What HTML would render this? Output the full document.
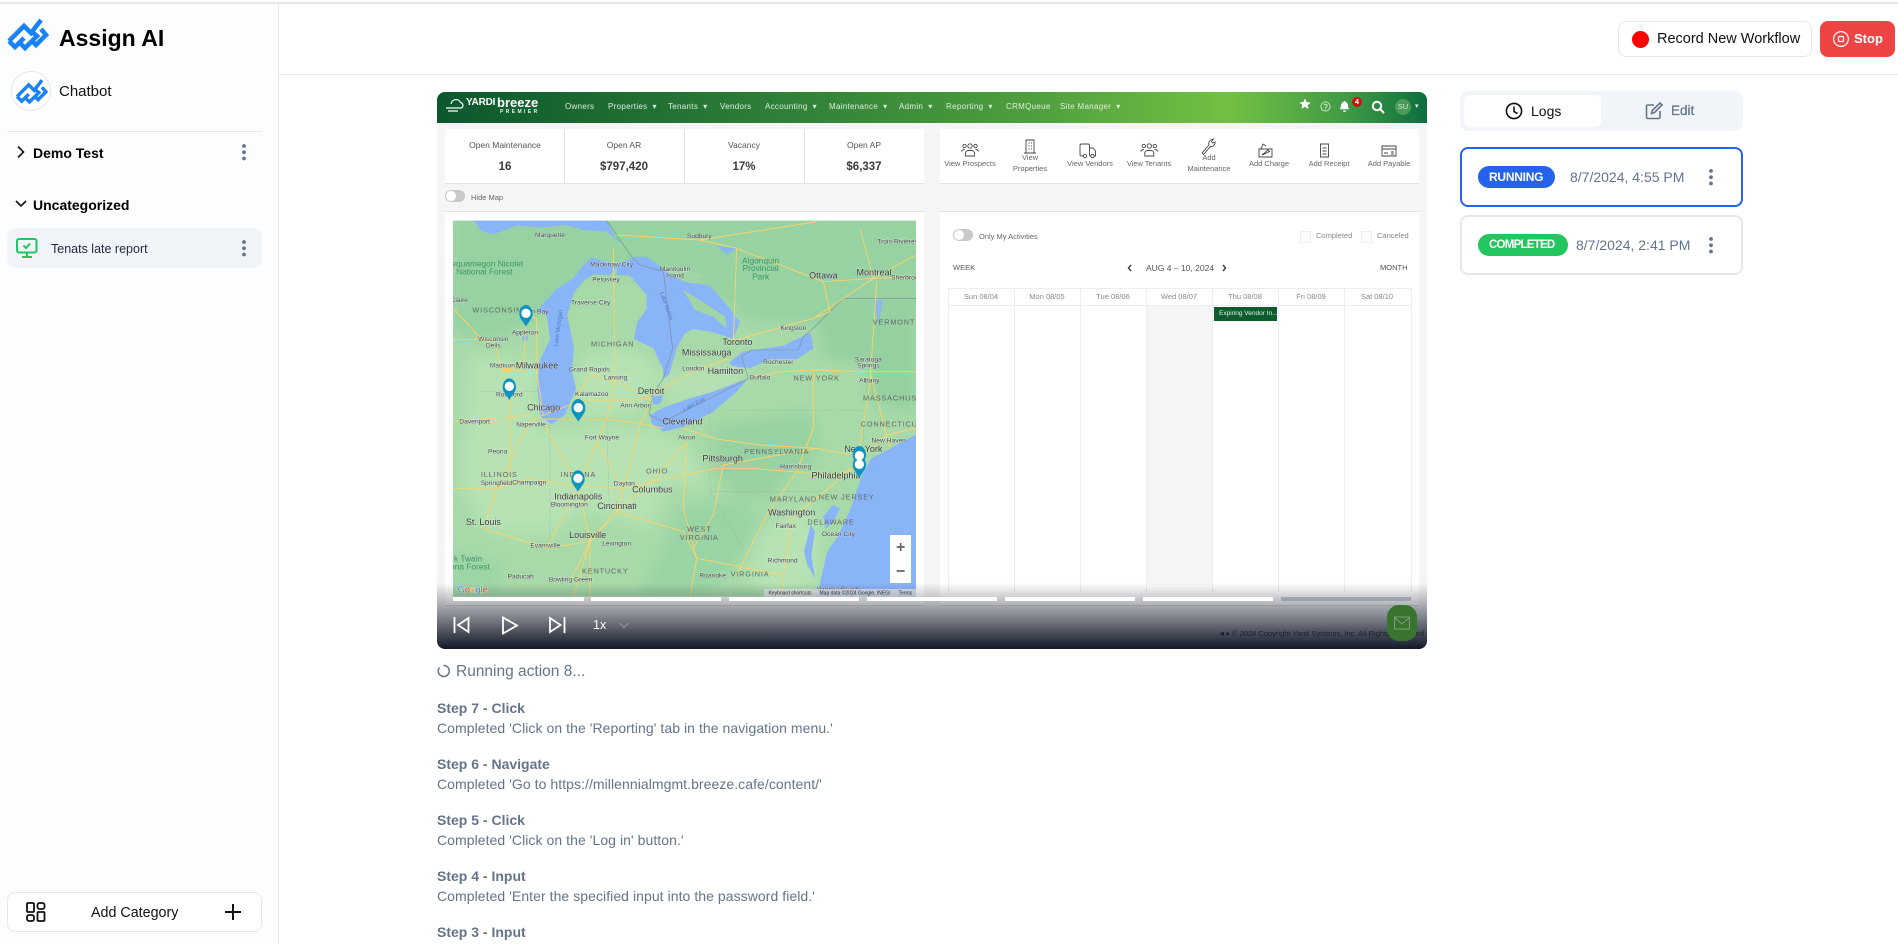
<!DOCTYPE html>
<html lang="en"><head><meta charset="utf-8"><title>Assign AI</title>
<style>
*{box-sizing:border-box}
html,body{margin:0;padding:0;width:1898px;height:944px;overflow:hidden;background:#fff;font-family:"Liberation Sans",sans-serif;color:#000}
.t{position:absolute;line-height:20px;margin-top:-10px;white-space:nowrap}
.c{transform:translateX(-50%)}
.b{position:absolute}
svg{position:absolute;overflow:visible}
.nv{font-size:8px;color:#dcefdc;letter-spacing:.3px}
.sl{font-size:8.5px;color:#555}
.sv{font-size:11.5px;color:#3a3a3a;font-weight:bold}
.al{font-size:7.5px;color:#666;line-height:11px;text-align:center;transform:translateX(-50%);position:absolute;white-space:nowrap}
.ch{font-size:7.5px;color:#888}
.ttl{font-size:14px;font-weight:bold;color:#64748b}
.dsc{font-size:14px;color:#64748b;letter-spacing:.06px}
#map text{font-family:"Liberation Sans",sans-serif;text-anchor:middle;fill:#3c4043;font-size:20px;paint-order:stroke;stroke:#ffffff99;stroke-width:2px}
#map .m{font-size:27px;fill:#333}
#map .s{font-size:22px;letter-spacing:2.5px;fill:#666;stroke:none}
#map .g{font-size:25px;fill:#3f9467;stroke:none}
#map .l{font-size:17px;fill:#4a78c0;stroke:none}
</style></head><body>

<!-- top line -->
<div class="b" style="left:0;top:2px;width:1898px;height:2px;background:#e5e7eb"></div>

<!-- sidebar -->
<div class="b" style="left:0;top:4px;width:279px;height:940px;background:#fcfdff;border-right:1px solid #e5e7eb"></div>
<svg style="left:0;top:-2px" width="60" height="60" fill="none" stroke="#1a82f7" stroke-width="4.6"><path d="M9 43L24 28L31 35L41 22M9 43L15 49L24 40M19 44L25 50L37 38L31 33M41 31L46 37L36 47L32 43"/></svg>
<div class="t" style="left:59px;top:38px;font-size:23px;font-weight:bold">Assign AI</div>
<div class="b" style="left:11px;top:71px;width:40px;height:40px;border-radius:50%;border:1px solid #e5e7eb;background:#fff"></div>
<svg style="left:0;top:0" width="60" height="120" fill="none" stroke="#1a82f7" stroke-width="4.4"><g transform="translate(10 63) scale(.78)"><path d="M9 43L24 28L31 35L41 22M9 43L15 49L24 40M19 44L25 50L37 38L31 33M41 31L46 37L36 47L32 43"/></g></svg>
<div class="t" style="left:59px;top:92px;font-size:15px;color:#111">Chatbot</div>
<div class="b" style="left:7px;top:131px;width:255px;height:1px;background:#e5e7eb"></div>
<svg style="left:15px;top:145px" width="12" height="14" fill="none" stroke="#111" stroke-width="1.6"><path d="M3 1.5L8.5 7L3 12.5"/></svg>
<div class="t" style="left:33px;top:153px;font-size:14px;font-weight:bold">Demo Test</div>
<svg style="left:242px;top:144px" width="5" height="16" fill="#64748b"><circle cx="2" cy="2" r="1.9"/><circle cx="2" cy="8.3" r="1.9"/><circle cx="2" cy="14.5" r="1.9"/></svg>
<svg style="left:14px;top:199px" width="14" height="10" fill="none" stroke="#111" stroke-width="1.6"><path d="M2 2L7 7L12 2"/></svg>
<div class="t" style="left:33px;top:205px;font-size:14px;font-weight:bold">Uncategorized</div>
<div class="b" style="left:7px;top:228px;width:255px;height:40px;background:#f1f5f9;border-radius:8px"></div>
<svg style="left:15px;top:237px" width="24" height="22" fill="none" stroke="#22c55e" stroke-width="2"><rect x="2" y="2" width="19.5" height="13.5" rx="2"/><path d="M7 20h10M12 16v4M8.5 8.5l2.5 2.5l4-4.5"/></svg>
<div class="t" style="left:51px;top:249px;font-size:12.5px;color:#1e293b">Tenats late report</div>
<svg style="left:242px;top:240px" width="5" height="16" fill="#64748b"><circle cx="2" cy="2" r="1.9"/><circle cx="2" cy="8.3" r="1.9"/><circle cx="2" cy="14.5" r="1.9"/></svg>
<div class="b" style="left:7px;top:892px;width:255px;height:40px;background:#fff;border:1px solid #e5e7eb;border-radius:8px"></div>
<svg style="left:25px;top:901px" width="22" height="22" fill="none" stroke="#111" stroke-width="1.8"><rect x="2" y="2" width="7" height="9" rx="1"/><rect x="12.500" y="2" width="7" height="6" rx="2"/><rect x="2" y="14" width="7" height="6" rx="2"/><rect x="12.500" y="11" width="7" height="9" rx="1"/></svg>
<div class="t" style="left:91px;top:913px;font-size:14.3px;color:#111">Add Category</div>
<svg style="left:224px;top:903px" width="18" height="18" stroke="#111" stroke-width="2"><path d="M9 1v16M1 9h16"/></svg>

<!-- header -->
<div class="b" style="left:279px;top:74px;width:1619px;height:1px;background:#e5e7eb"></div>
<div class="b" style="left:1618px;top:21px;width:194px;height:36px;border:1px solid #e5e7eb;border-radius:8px;background:#fff"></div>
<div class="b" style="left:1632px;top:31px;width:17px;height:17px;border-radius:50%;background:#f00"></div>
<div class="t" style="left:1657px;top:39px;font-size:14.5px;color:#111">Record New Workflow</div>
<div class="b" style="left:1820px;top:21px;width:75px;height:36px;border-radius:8px;background:#ef4444"></div>
<svg style="left:1832px;top:30px" width="18" height="18" fill="none" stroke="#fff" stroke-width="1.2"><circle cx="9" cy="9" r="7.400"/><rect x="6.500" y="6.500" width="5" height="5" rx="1"/></svg>
<div class="t" style="left:1854px;top:39px;font-size:13px;font-weight:bold;color:#fff">Stop</div>

<!-- right tabs -->
<div class="b" style="left:1460px;top:91px;width:283px;height:40px;background:#f1f5f9;border-radius:8px"></div>
<div class="b" style="left:1464px;top:95px;width:137px;height:32px;background:#fff;border-radius:6px"></div>
<svg style="left:1505px;top:102px" width="18" height="18" fill="none" stroke="#111" stroke-width="1.6"><circle cx="9" cy="9" r="7.6"/><path d="M9 4.500V9.500L12.500 11.500"/></svg>
<div class="t" style="left:1531px;top:111px;font-size:14px;color:#111">Logs</div>
<svg style="left:1645px;top:102px" width="18" height="18" fill="none" stroke="#64748b" stroke-width="1.6"><path d="M9 3H3a1.500 1.500 0 0 0-1.500 1.500V15A1.500 1.500 0 0 0 3 16.500h10.500A1.500 1.500 0 0 0 15 15V9M6.500 11.500l.7-3L15 1l2 2L9.500 10.500z"/></svg>
<div class="t" style="left:1671px;top:111px;font-size:13.5px;color:#64748b;-webkit-text-stroke:.25px #64748b">Edit</div>

<div class="b" style="left:1460px;top:147px;width:283px;height:60px;border:2px solid #2563eb;border-radius:8px;background:#fff"></div>
<div class="b" style="left:1478px;top:166px;width:77px;height:22px;border-radius:11px;background:#2563eb"></div>
<div class="t" style="left:1489px;top:177px;font-size:12px;font-weight:bold;color:#fff;letter-spacing:-.25px">RUNNING</div>
<div class="t" style="left:1570px;top:177px;font-size:14px;color:#64748b">8/7/2024, 4:55 PM</div>
<svg style="left:1709px;top:169px" width="5" height="16" fill="#64748b"><circle cx="2" cy="2" r="1.9"/><circle cx="2" cy="8.3" r="1.9"/><circle cx="2" cy="14.5" r="1.9"/></svg>

<div class="b" style="left:1460px;top:215px;width:283px;height:60px;border:2px solid #e5e7eb;border-radius:8px;background:#fff"></div>
<div class="b" style="left:1478px;top:234px;width:90px;height:22px;border-radius:11px;background:#22c55e"></div>
<div class="t" style="left:1489px;top:245px;font-size:11.5px;font-weight:bold;color:#fff;letter-spacing:-.75px">COMPLETED</div>
<div class="t" style="left:1576px;top:245px;font-size:14px;color:#64748b">8/7/2024, 2:41 PM</div>
<svg style="left:1709px;top:237px" width="5" height="16" fill="#64748b"><circle cx="2" cy="2" r="1.9"/><circle cx="2" cy="8.3" r="1.9"/><circle cx="2" cy="14.5" r="1.9"/></svg>

<!-- video -->
<div class="b" style="left:437px;top:92px;width:990px;height:557px;overflow:hidden;border-radius:8px;background:#f5f5f5">
<div class="b" style="left:-437px;top:-92px;width:1898px;height:944px">
  <div class="b" style="left:437px;top:92px;width:990px;height:31px;background:linear-gradient(90deg,#0c572d 0%,#2f8038 35%,#4f9e3e 60%,#74c043 80%,#3f9a45 92%,#0b6f3e 100%)"></div>
  <!-- yardi logo -->
  <svg style="left:445px;top:96px" width="20" height="18" fill="none" stroke="#fff" stroke-width="1.2"><path d="M6 8a5 5 0 0 1 9.500-1.500a3 3 0 0 1 1 5.500H5M1 12h4M3 15h10"/></svg>
  <div class="t" style="left:466px;top:103px;font-size:10px;font-weight:bold;color:#fff;letter-spacing:-.2px">YARDI</div>
  <div class="t" style="left:497px;top:103px;font-size:13px;font-weight:bold;color:#fff">breeze</div>
  <div class="t" style="left:500px;top:112px;font-size:5px;font-weight:bold;color:#eaf5ea;letter-spacing:2.400px">PREMIER</div>
  <!-- nav -->
  <div class="t nv" style="left:565px;top:107px">Owners</div>
  <div class="t nv" style="left:608px;top:107px">Properties &nbsp;▾</div>
  <div class="t nv" style="left:668px;top:107px">Tenants &nbsp;▾</div>
  <div class="t nv" style="left:720px;top:107px">Vendors</div>
  <div class="t nv" style="left:765px;top:107px">Accounting &nbsp;▾</div>
  <div class="t nv" style="left:829px;top:107px">Maintenance &nbsp;▾</div>
  <div class="t nv" style="left:899px;top:107px">Admin &nbsp;▾</div>
  <div class="t nv" style="left:946px;top:107px">Reporting &nbsp;▾</div>
  <div class="t nv" style="left:1006px;top:107px">CRMQueue</div>
  <div class="t nv" style="left:1060px;top:107px">Site Manager &nbsp;▾</div>
  <svg style="left:1299px;top:98px" width="12" height="12" fill="#fff"><path d="M6 .5l1.700 3.600 3.900.5-2.900 2.700.8 3.900L6 8.800l-3.500 1.900.8-3.900L.4 4.600l3.900-.5z"/></svg>
  <svg style="left:1320px;top:101px" width="11" height="11" fill="none" stroke="#e6f3e0" stroke-width=".8"><circle cx="5.500" cy="5.500" r="4.600"/><path d="M4 4.300a1.600 1.600 0 1 1 1.600 2V7.500M5.500 8.500v.8"/></svg>
  <svg style="left:1339px;top:100px" width="11" height="13" fill="#fff"><path d="M5.500 1a1 1 0 0 1 1 1c2 .6 2.600 2.200 2.600 4.200c0 1.500.7 2.200 1.400 3H.5c.7-.8 1.400-1.500 1.400-3c0-2 .6-3.600 2.600-4.200a1 1 0 0 1 1-1zM4 10.500h3a1.500 1.500 0 0 1-3 0z"/></svg>
  <div class="b" style="left:1352px;top:97px;width:10px;height:10px;border-radius:50%;background:#d0100f"></div>
  <div class="t c" style="left:1357px;top:102px;font-size:7.500px;font-weight:bold;color:#fff">4</div>
  <svg style="left:1371px;top:100px" width="14" height="14" fill="none" stroke="#fff" stroke-width="2"><circle cx="6" cy="6" r="4.200"/><path d="M9 9l4 4"/></svg>
  <div class="b" style="left:1395px;top:99px;width:16px;height:16px;border-radius:50%;background:#4a9a58"></div>
  <div class="t c" style="left:1403px;top:107px;font-size:7.500px;color:#cfe8cf">SU</div>
  <div class="t" style="left:1415px;top:107px;font-size:7px;color:#fff">▾</div>

  <!-- stats -->
  <div class="b" style="left:445px;top:129px;width:479px;height:55px;background:#fff;border-bottom:1px solid #e2e2e2"></div>
  <div class="b" style="left:564px;top:129px;width:1px;height:55px;background:#e2e2e2"></div>
  <div class="b" style="left:684px;top:129px;width:1px;height:55px;background:#e2e2e2"></div>
  <div class="b" style="left:804px;top:129px;width:1px;height:55px;background:#e2e2e2"></div>
  <div class="t c sl" style="left:505px;top:145px">Open Maintenance</div>
  <div class="t c sl" style="left:624px;top:145px">Open AR</div>
  <div class="t c sl" style="left:744px;top:145px">Vacancy</div>
  <div class="t c sl" style="left:864px;top:145px">Open AP</div>
  <div class="t c sv" style="left:505px;top:167px">16</div>
  <div class="t c sv" style="left:624px;top:167px">$797,420</div>
  <div class="t c sv" style="left:744px;top:167px">17%</div>
  <div class="t c sv" style="left:864px;top:167px">$6,337</div>
  <div class="b" style="left:445px;top:190px;width:20px;height:12px;border-radius:6px;background:#c9c9c9"></div>
  <div class="b" style="left:446px;top:191px;width:10px;height:10px;border-radius:50%;background:#fff"></div>
  <div class="t" style="left:471px;top:198px;font-size:7.500px;color:#666">Hide Map</div>

  <!-- actions -->
  <div class="b" style="left:940px;top:129px;width:479px;height:55px;background:#fff;border-bottom:1px solid #e2e2e2"></div>
  <svg style="left:940px;top:129px" width="480" height="30" fill="none" stroke="#444" stroke-width=".9">
    <g><circle cx="30" cy="17" r="2.200"/><circle cx="24.500" cy="17" r="1.700"/><circle cx="35.500" cy="17" r="1.700"/><path d="M25.500 27v-3a3 3 0 0 1 3-2.500h3a3 3 0 0 1 3 2.500v3zM21.500 22.500c.5-1.500 1.500-2 3-2M38.500 22.500c-.5-1.500-1.500-2-3-2"/></g>
    <g transform="translate(179.300 0)"><circle cx="30" cy="17" r="2.200"/><circle cx="24.500" cy="17" r="1.700"/><circle cx="35.500" cy="17" r="1.700"/><path d="M25.500 27v-3a3 3 0 0 1 3-2.500h3a3 3 0 0 1 3 2.500v3zM21.500 22.500c.5-1.500 1.500-2 3-2M38.500 22.500c-.5-1.500-1.500-2-3-2"/></g>
    <path d="M86 11h8v13h-8zM84 24h12M88.500 14h1M91 14h1M88.500 17h1M91 17h1M88.500 20h1M91 20h1"/>
    <path d="M143 27h-1.500a1.500 1.500 0 0 1-1.500-1.500V16.500a1.500 1.500 0 0 1 1.500-1.500h6.500a1.500 1.500 0 0 1 1.500 1.500V27M150 19h3l2.500 3v5h-1M150 27h1"/><circle cx="145" cy="27" r="1.700"/><circle cx="152.500" cy="27" r="1.700"/>
    <path d="M262 24l7-8c-1-3 1-5 3-5.500l1.500-.5-2 2.500 1 1.500 2.500-1c.5 2.500-1.500 5-4.500 4.500l-7 8z"/>
    <path d="M319 20h13v8h-13zM321 20l2-5 3 2M322 26l6-5 1.500 1.500-6 3z"/>
    <path d="M380.500 15h8v13h-8zM382.500 19h4M382.500 22h4M382.500 25h4"/>
    <path d="M442 17h14v10h-14zM442 20h14M444 24h4M451 23h3M451 25h3"/>
  </svg>
  <div class="al" style="left:970px;top:158px">View Prospects</div>
  <div class="al" style="left:1030px;top:152px">View<br>Properties</div>
  <div class="al" style="left:1090px;top:158px">View Vendors</div>
  <div class="al" style="left:1149px;top:158px">View Tenants</div>
  <div class="al" style="left:1209px;top:152px">Add<br>Maintenance</div>
  <div class="al" style="left:1269px;top:158px">Add Charge</div>
  <div class="al" style="left:1329px;top:158px">Add Receipt</div>
  <div class="al" style="left:1389px;top:158px">Add Payable</div>

  <!-- map panel -->
  <div class="b" style="left:445px;top:211px;width:479px;height:395px;background:#fff;border-top:1px solid #e2e2e2;border-bottom:1px solid #ddd"></div>
  <svg id="map" style="left:450px;top:215px;filter:blur(.35px)" width="480" height="390" viewBox="0 0 1440 1170">
    <defs><clipPath id="mc"><rect x="9" y="17" width="1389" height="1128"/></clipPath>
    <filter id="sm" x="-10%" y="-10%" width="120%" height="120%"><feGaussianBlur stdDeviation="22"/></filter></defs>
    <g clip-path="url(#mc)">
      <rect x="0" y="0" width="1440" height="1170" fill="#a8daa9"/>
      <!-- terrain -->
      <g filter="url(#sm)">
      <path fill="#96d2a2" d="M0 0H1440V300L1260 360 1110 330 900 320 740 200 420 170 330 260 240 330 120 380 0 350z"/>
      <path fill="#b6e2b4" d="M60 420L270 440 260 640 540 640 600 640 700 680 780 820 660 800 600 940 420 880 290 960 110 950 30 800z"/>
      <path fill="#b6e2b4" d="M400 420L560 400 640 480 600 540 560 600 400 610 370 520z"/>
      <path fill="#b5e0b3" d="M650 470L840 450 890 500 760 560 660 570 640 530z"/>
      <path fill="#96d2a2" d="M790 630L1090 590 1100 730 1020 780 960 850 860 840 800 780z"/>
      <path fill="#94d0a0" d="M1100 300L1250 280 1398 300 1398 600 1250 550 1260 450 1120 430z"/>
      <path fill="#99d4a5" d="M680 880L860 850 950 930 820 1100 730 1145 560 1145 640 1000z"/>
      <path fill="#b6e2b4" d="M930 940L1090 860 1110 1000 1100 1145 960 1145 880 1080z"/>
      <path fill="#9cd6a6" d="M0 1000L170 1040 130 1145 0 1145z"/>
      </g>
      <!-- water -->
      <g fill="#8ab4f8">
        <path d="M70 17H470L495 65 520 85 500 75 470 50 400 45 345 30 280 38 200 32 130 58 95 48z"/>
        <path d="M425 128L505 150 480 180 430 178 400 198 372 232 352 300 372 400 365 470 378 520 345 600 305 628 272 605 262 520 268 440 300 372 290 300 262 285 320 222 370 190 400 150z"/>
        <path d="M500 150L555 125 590 125 640 160 700 200 780 212 835 275 870 320 850 372 790 352 730 342 705 355 680 400 658 478 640 492 640 465 610 400 552 372 562 320 590 282 590 240 540 182 500 180z"/>
        <path d="M600 600L640 578 720 550 790 530 895 490 860 530 790 590 700 636 640 650 605 625z"/>
        <path d="M838 442L878 410 1000 392 1082 352 1090 400 1042 432 960 432 900 460 845 452z"/>
        <path d="M1398 658V1145H1100L1132 1010 1165 962 1200 885 1236 782 1262 732 1340 690z"/>
        <path d="M1128 940L1150 920 1170 880 1148 870 1120 905z"/>
        <path d="M1062 1010L1082 930 1095 950 1084 1020 1095 1090 1072 1050z"/>
        <path d="M800 92L860 100 830 118z"/>
        <path d="M605 545L640 540 632 565 610 570z"/>
        <path d="M1270 255L1300 255 1285 330z" opacity=".8"/>
        <circle cx="225" cy="370" r="9"/>
      </g>
      <!-- islands -->
      <path fill="#a0d6a6" d="M635 150L700 158 760 180 730 192 660 178z"/>
      <path fill="#a0d6a6" d="M700 225L760 262 825 305 830 340 790 305 735 285z"/>
      <!-- borders -->
      <g fill="none" stroke="#7d8a91" stroke-width="1.800">
        <path d="M470 17L510 75 545 125 570 150 640 170 668 400 640 490 605 545 598 600 640 620 700 590 790 545 895 490 875 425 905 405 1045 405 1060 365 1105 325 1180 250H1398"/>
      </g>
      <g fill="none" stroke="#86a08c" stroke-width="1.300" stroke-dasharray="3 4">
        <path d="M280 610H470L565 625M95 530L260 530M300 630L300 1000M470 610L478 880M780 560V830H1120M835 585H1240M1243 585L1240 680M780 830L880 1000"/>
      </g>
      <!-- roads -->
      <g fill="none" stroke="#fcd36a" stroke-width="2.800" stroke-linejoin="round">
        <path d="M280 600L400 555 550 555 605 548M280 612L470 612 565 625 640 640M700 640L800 672 930 690 1100 700 1200 720"/>
        <path d="M100 940L140 820 240 790 385 815 520 820 605 800 800 760 900 760 1030 770 1150 782 1222 760"/>
        <path d="M605 548L570 630 520 820 500 890 420 980 370 1145M280 620L385 815 420 980 360 1100M100 940L140 820 240 620 280 600"/>
        <path d="M180 550L180 800 140 820M10 375L130 370 180 550M155 465L260 470 280 600M260 470L260 310 230 300"/>
        <path d="M100 940L290 1000 415 980 500 890 700 950 740 1030 1000 1080M710 680L700 880 740 1030 720 1145M820 750L790 900 730 1000"/>
        <path d="M1090 640L1040 770 950 900 860 1080M1000 1145L1000 1080 1025 910 1160 800 1230 730 1310 660 1398 640M1225 720L1260 500 1280 200"/>
        <path d="M840 380L1090 310 1270 190 1398 120M860 100L1120 200 1270 190M750 75L860 100 850 380M500 60L750 75 1100 20"/>
        <path d="M900 490L990 470 1090 465 1260 470 1398 470M420 480L500 500 600 548M380 550L420 480M490 100L495 500 470 610M730 470L600 540M730 470L840 430"/>
        <path d="M710 680L605 800 500 890M820 750L1100 700M440 680L520 820M385 815L470 612M290 1000L385 815M10 620L240 600M10 820L140 820M1260 470L1320 700M1090 465L1090 640 1040 770"/>
        <path d="M10 280L110 390 130 370M1120 200L1140 290 1090 310M230 300L220 450 155 465M420 1145L420 980M1398 185L1270 190 1230 40"/>
      </g>
      <!-- labels -->
      <text x="300" y="66">Marquette</text><text x="748" y="69">Sudbury</text><text x="1343" y="86">Trois-Rivières</text>
      <text class="g" x="932" y="145">Algonquin</text><text class="g" x="932" y="168">Provincial</text><text class="g" x="932" y="193">Park</text>
      <text class="m" x="1120" y="191">Ottawa</text><text class="m" x="1272" y="181">Montreal</text><text x="1375" y="194">Sherbrooke</text>
      <text x="485" y="154">Mackinaw City</text><text x="675" y="168">Manitoulin</text><text x="675" y="188">Island</text><text x="468" y="199">Petoskey</text>
      <text class="g" x="105" y="155">hequamegon Nicolet</text><text class="g" x="103" y="179">National Forest</text>
      <text x="422" y="269">Traverse City</text><text class="s" x="142" y="293">WISCONSIN</text><text x="270" y="296">n Bay</text><text x="28" y="261">Claire</text>
      <text x="225" y="358">Appleton</text><text x="130" y="378">Wisconsin</text><text x="130" y="398">Dells</text><text x="1030" y="345">Kingston</text>
      <text class="s" x="1332" y="328">VERMONT</text><text class="s" x="488" y="395">MICHIGAN</text><text class="m" x="862" y="390">Toronto</text><text class="m" x="770" y="421">Mississauga</text>
      <text class="m" x="826" y="477">Hamilton</text><text x="985" y="447">Rochester</text><text x="930" y="493">Buffalo</text><text x="1255" y="439">Saratoga</text><text x="1255" y="458">Springs</text>
      <text x="1258" y="503">Albany</text><text class="s" x="1100" y="496">NEW YORK</text><text class="s" x="1320" y="557">MASSACHUS</text><text x="157" y="457">Madison</text>
      <text class="m" x="261" y="460">Milwaukee</text><text x="418" y="469">Grand Rapids</text><text x="497" y="494">Lansing</text><text x="730" y="467">London</text><text x="178" y="544">Rockford</text>
      <text x="425" y="543">Kalamazoo</text><text class="m" x="603" y="537">Detroit</text><text x="555" y="577">Ann Arbor</text><text class="m" x="281" y="586">Chicago</text><text x="74" y="626">Davenport</text>
      <text x="243" y="635">Naperville</text><text class="m" x="697" y="628">Cleveland</text><text x="456" y="674">Fort Wayne</text><text x="710" y="673">Akron</text><text class="s" x="1318" y="635">CONNECTICU</text>
      <text x="1316" y="683">New Haven</text><text class="m" x="1240" y="711">New York</text><text class="s" x="980" y="717">PENNSYLVANIA</text><text x="143" y="715">Peoria</text><text class="m" x="818" y="740">Pittsburgh</text>
      <text x="1037" y="760">Harrisburg</text><text class="s" x="148" y="786">ILLINOIS</text><text class="s" x="385" y="786">INDIANA</text><text class="s" x="621" y="776">OHIO</text><text x="139" y="810">Springfield</text>
      <text x="238" y="809">Champaign</text><text x="523" y="812">Dayton</text><text class="m" x="607" y="833">Columbus</text><text class="m" x="1158" y="791">Philadelphia</text><text class="m" x="385" y="853">Indianapolis</text>
      <text class="s" x="1190" y="854">NEW JERSEY</text><text class="s" x="1030" y="859">MARYLAND</text><text x="358" y="875">Bloomington</text><text class="m" x="501" y="882">Cincinnati</text><text class="m" x="1025" y="901">Washington</text>
      <text class="s" x="1143" y="928">DELAWARE</text><text class="m" x="100" y="930">St. Louis</text><text x="1007" y="939">Fairfax</text><text class="s" x="748" y="950">WEST</text><text class="s" x="748" y="975">VIRGINIA</text>
      <text x="1165" y="963">Ocean City</text><text class="m" x="413" y="969">Louisville</text><text x="286" y="998">Evansville</text><text x="500" y="991">Lexington</text><text x="998" y="1043">Richmond</text>
      <text class="s" x="466" y="1075">KENTUCKY</text><text class="s" x="900" y="1085">VIRGINIA</text><text x="788" y="1087">Roanoke</text><text x="212" y="1090">Paducah</text><text x="362" y="1100">Bowling Green</text>
      <text class="g" x="50" y="1039">rk Twain</text><text class="g" x="60" y="1064">ona Forest</text><text x="1165" y="1128">Virginia Beach</text>
      <text class="l" transform="translate(330 340) rotate(-82)" x="0" y="0">Lake Michigan</text>
      <text class="l" transform="translate(645 275) rotate(70)" x="0" y="0">Lake Huron</text>
      <text class="l" transform="translate(735 572) rotate(-28)" x="0" y="0">Lake Erie</text>
      <!-- pins -->
      <g fill="#0d93c4">
        <path d="M228 335C218 318 208 310 208 297a20 27 0 0 1 40 0C248 310 238 318 228 335z"/>
        <path d="M178 555C168 538 158 530 158 517a20 27 0 0 1 40 0C198 530 188 538 178 555z"/>
        <path d="M385 620C375 603 364 595 364 580a21 28 0 0 1 42 0C406 595 395 603 385 620z"/>
        <path d="M384 830C374 813 364 805 364 793a20 27 0 0 1 40 0C404 805 394 813 384 830z"/>
        <path d="M1228 758C1218 741 1208 733 1208 720a20 27 0 0 1 40 0C1248 733 1238 741 1228 758z"/>
        <path d="M1228 788C1218 771 1208 763 1208 750a20 27 0 0 1 40 0C1248 763 1238 771 1228 788z"/>
      </g>
      <g fill="#fff"><circle cx="228" cy="295" r="14"/><circle cx="178" cy="514" r="14"/><circle cx="385" cy="578" r="14"/><circle cx="384" cy="790" r="14"/><circle cx="1228" cy="722" r="14"/><circle cx="1228" cy="748" r="14"/></g>
      <!-- controls -->
      <rect x="1320" y="960" width="63" height="144" rx="3" fill="#fff"/>
      <path d="M1340 996h24M1352 984v24M1340 1068h24" stroke="#666" stroke-width="5"/>
      <rect x="942" y="1122" width="456" height="23" fill="#e8eaed" opacity=".85"/>
      <text x="1020" y="1139" style="font-size:15px;stroke:none;fill:#333">Keyboard shortcuts</text>
      <text x="1215" y="1139" style="font-size:15px;stroke:none;fill:#333">Map data ©2024 Google, INEGI</text>
      <text x="1366" y="1139" style="font-size:15px;stroke:none;fill:#333">Terms</text>
      <text x="68" y="1132" style="font-size:28px;fill:#4285f4;stroke:#fff;stroke-width:2.500px"><tspan fill="#4285f4">G</tspan><tspan fill="#ea4335">o</tspan><tspan fill="#fbbc05">o</tspan><tspan fill="#4285f4">g</tspan><tspan fill="#34a853">l</tspan><tspan fill="#ea4335">e</tspan></text>
    </g>
  </svg>

  <!-- calendar panel -->
  <div class="b" style="left:940px;top:211px;width:479px;height:395px;background:#fff;border-top:1px solid #e2e2e2;border-bottom:1px solid #ddd"></div>
  <div class="b" style="left:953px;top:229px;width:20px;height:12px;border-radius:6px;background:#c9c9c9"></div>
  <div class="b" style="left:954px;top:230px;width:10px;height:10px;border-radius:50%;background:#fff"></div>
  <div class="t" style="left:979px;top:237px;font-size:7.500px;color:#666">Only My Activities</div>
  <div class="b" style="left:1300px;top:231px;width:11px;height:12px;border:1px solid #eee"></div>
  <div class="t ch" style="left:1316px;top:236px">Completed</div>
  <div class="b" style="left:1361px;top:231px;width:11px;height:12px;border:1px solid #eee"></div>
  <div class="t ch" style="left:1377px;top:236px">Canceled</div>
  <div class="t" style="left:953px;top:268px;font-size:7.500px;color:#555">WEEK</div>
  <div class="t" style="left:1146px;top:268px;font-size:8.500px;color:#555">AUG 4 – 10, 2024</div>
  <svg style="left:1126px;top:264px" width="102" height="8" fill="none" stroke="#444" stroke-width="1.500"><path d="M5 1L2.500 4L5 7M97 1L99.500 4L97 7"/></svg>
  <div class="t" style="left:1380px;top:268px;font-size:7.500px;color:#555">MONTH</div>
  <div class="b" style="left:1146px;top:306px;width:66px;height:279px;background:#f5f5f5"></div>
  <div class="b" style="left:948px;top:288px;width:1px;height:304px;background:#eaeef2"></div>
  <div class="b" style="left:1411px;top:288px;width:1px;height:304px;background:#eaeef2"></div>
  <div class="b" style="left:948px;top:288px;width:463px;height:1px;background:#eaeef2"></div>
  <div class="b" style="left:948px;top:305px;width:463px;height:1px;background:#eaeef2"></div>
  <div class="b" style="left:1014px;top:288px;width:1px;height:304px;background:#eaeef2"></div>
  <div class="b" style="left:1080px;top:288px;width:1px;height:304px;background:#eaeef2"></div>
  <div class="b" style="left:1146px;top:288px;width:1px;height:304px;background:#eaeef2"></div>
  <div class="b" style="left:1212px;top:288px;width:1px;height:304px;background:#eaeef2"></div>
  <div class="b" style="left:1278px;top:288px;width:1px;height:304px;background:#eaeef2"></div>
  <div class="b" style="left:1344px;top:288px;width:1px;height:304px;background:#eaeef2"></div>
  <div class="t c ch" style="left:981px;top:297px">Sun 08/04</div>
  <div class="t c ch" style="left:1047px;top:297px">Mon 08/05</div>
  <div class="t c ch" style="left:1113px;top:297px">Tue 08/06</div>
  <div class="t c ch" style="left:1179px;top:297px">Wed 08/07</div>
  <div class="t c ch" style="left:1245px;top:297px">Thu 08/08</div>
  <div class="t c ch" style="left:1311px;top:297px">Fri 08/09</div>
  <div class="t c ch" style="left:1377px;top:297px">Sat 08/10</div>
  <div class="b" style="left:1214px;top:307px;width:63px;height:14px;background:#0d5c2e"></div>
  <div class="t" style="left:1219px;top:314px;font-size:6.500px;color:#e6f0e6">Expiring Vendor In...</div>

  <div class="t" style="left:1218px;top:634px;font-size:7.500px;color:#3c3f46">&#9668;&#9679; © 2024 Copyright Yardi Systems, Inc. All Rights Reserved.</div>

  <!-- player overlay -->
  <div class="b" style="left:437px;top:583px;width:990px;height:66px;background:linear-gradient(180deg,rgba(17,24,39,0) 0%,#111827 100%)"></div>
  <div class="b" style="left:1387px;top:605px;width:30px;height:36px;border-radius:12px;background:#39742f"></div>
  <svg style="left:1393px;top:614px" width="18" height="18" fill="none" stroke="#7aa078" stroke-width="1"><rect x="1.500" y="3" width="15" height="12"/><path d="M2 4l7 6 7-6"/></svg>
  <div class="b" style="left:453px;top:597px;width:131px;height:4px;background:#fff"></div>
  <div class="b" style="left:591px;top:597px;width:130px;height:4px;background:#fff"></div>
  <div class="b" style="left:729px;top:597px;width:130px;height:4px;background:#fff"></div>
  <div class="b" style="left:867px;top:597px;width:130px;height:4px;background:#fff"></div>
  <div class="b" style="left:1005px;top:597px;width:130px;height:4px;background:#fff"></div>
  <div class="b" style="left:1143px;top:597px;width:130px;height:4px;background:#fff"></div>
  <div class="b" style="left:1281px;top:597px;width:130px;height:4px;background:#9ca3af"></div>
  <svg style="left:450px;top:610px" width="130" height="30" fill="none" stroke="#fff" stroke-width="1.800"><path d="M4.500 7V23M18.500 8L8 15L18.500 22z"/><path d="M53 7.500L67 15.500L53 23.500z"/><path d="M100 8L110.500 15L100 22zM114.500 7V23"/></svg>
  <div class="t" style="left:593px;top:625px;font-size:12.500px;color:#fff">1x</div>
  <svg style="left:618px;top:622px" width="12" height="7" fill="none" stroke="#8b9099" stroke-width="1.300"><path d="M1.500 1L6 5.500L10.500 1"/></svg>
</div></div>

<!-- log text -->
<svg style="left:437px;top:664px" width="14" height="14" fill="none" stroke="#64748b" stroke-width="1.500"><path d="M6.500 1.500A5.500 5.500 0 1 1 2.500 3.500"/></svg>
<div class="t" style="left:456px;top:672px;font-size:15.500px;color:#64748b">Running action 8...</div>
<div class="t ttl" style="left:437px;top:708px">Step 7 - Click</div>
<div class="t dsc" style="left:437px;top:728px">Completed 'Click on the 'Reporting' tab in the navigation menu.'</div>
<div class="t ttl" style="left:437px;top:764px">Step 6 - Navigate</div>
<div class="t dsc" style="left:437px;top:784px">Completed 'Go to https://millennialmgmt.breeze.cafe/content/'</div>
<div class="t ttl" style="left:437px;top:820px">Step 5 - Click</div>
<div class="t dsc" style="left:437px;top:840px">Completed 'Click on the 'Log in' button.'</div>
<div class="t ttl" style="left:437px;top:876px">Step 4 - Input</div>
<div class="t dsc" style="left:437px;top:896px">Completed 'Enter the specified input into the password field.'</div>
<div class="t ttl" style="left:437px;top:932px">Step 3 - Input</div>
</body></html>
